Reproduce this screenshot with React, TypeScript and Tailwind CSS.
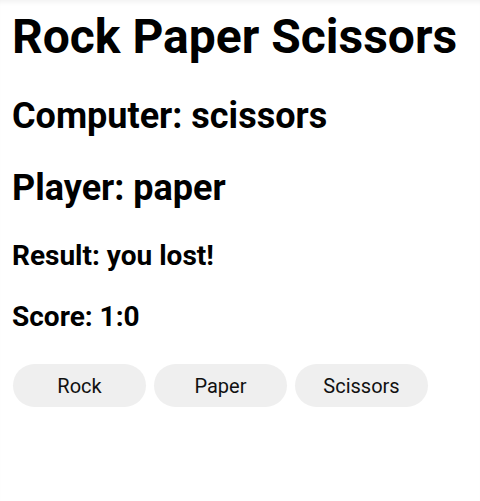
import React from 'react';

const choices = ['Rock', 'Paper', 'Scissors'];

export default function App() {
  return (
    <div className="min-h-[501px] bg-white px-3 pt-[9px] text-black shadow-[inset_0_5px_5px_-3px_rgba(0,0,0,0.06)]" style={{ fontFamily: 'Roboto, "Noto Sans", sans-serif' }}>
      <h1 className="text-[48px] font-bold leading-[56px]">Rock Paper Scissors</h1>
      <h2 className="mt-[29px] text-[36px] font-bold leading-[44px]">Computer: scissors</h2>
      <h2 className="mt-[28px] text-[36px] font-bold leading-[44px]">Player: paper</h2>
      <h3 className="mt-[28px] text-[28px] font-bold leading-[36px]">Result: you lost!</h3>
      <h3 className="mt-[25px] text-[28px] font-bold leading-[36px]">Score: 1:0</h3>

      <div className="mt-[29px] flex gap-2 pl-px">
        {choices.map((choice) => (
          <button
            key={choice}
            className="h-[43px] w-[133px] rounded-full bg-[#efefef] text-[20px] text-[#111]"
          >
            {choice}
          </button>
        ))}
      </div>
    </div>
  );
}
